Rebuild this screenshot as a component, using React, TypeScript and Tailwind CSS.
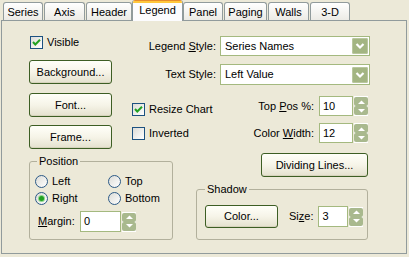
import type { ReactNode } from "react";

const tabs = [
  { label: "Series", w: "w-[40px]", ml: "ml-0" },
  { label: "Axis", w: "w-[41px]", ml: "ml-[1px]" },
  { label: "Header", w: "w-[46px]", ml: "ml-[1px]" },
  { label: "Legend", w: "w-[51px]", ml: "ml-0", active: true },
  { label: "Panel", w: "w-[40px]", ml: "ml-0" },
  { label: "Paging", w: "w-[43px]", ml: "ml-[1px]" },
  { label: "Walls", w: "w-[41px]", ml: "ml-[1px]" },
  { label: "3-D", w: "w-[40px]", ml: "ml-[1px]" },
];

function Tab({ label, w, ml, active }: { label: string; w: string; ml: string; active?: boolean }) {
  if (active) {
    return (
      <div
        className={`${w} ${ml} relative z-10 -mb-px flex h-[21px] flex-col overflow-hidden rounded-t-[3px] border-x border-[#919B9C] bg-[#FCFCFE]`}
      >
        <div className="h-px bg-[#E68B2C]" />
        <div className="h-[2px] bg-[#FFC73C]" />
        <div className="flex flex-1 items-start justify-center pt-px">{label}</div>
      </div>
    );
  }
  return (
    <div
      className={`${w} ${ml} flex h-[18px] items-center justify-center rounded-t-[3px] border-x border-t border-[#919B9C] bg-gradient-to-b from-white to-[#ECEBE5] pt-[2px]`}
    >
      {label}
    </div>
  );
}

function CheckBox({ checked, label }: { checked?: boolean; label: string }) {
  return (
    <div className="flex h-[13px] items-center">
      <div className="flex h-[13px] w-[13px] items-center justify-center border border-[#1C5180] bg-gradient-to-br from-[#DCDCD7] to-white">
        {checked && (
          <svg width="11" height="11" viewBox="0 0 11 11">
            <polyline points="2,5 4.3,7.5 9,2.8" fill="none" stroke="#21A121" strokeWidth="2" />
          </svg>
        )}
      </div>
      <span className="ml-[4px] leading-[13px]">{label}</span>
    </div>
  );
}

function Radio({ checked, label }: { checked?: boolean; label: string }) {
  return (
    <div className="flex h-[13px] items-center">
      <div className="flex h-[13px] w-[13px] items-center justify-center rounded-full border border-[#2C5A87] bg-gradient-to-br from-[#DCDCD7] to-white">
        {checked && <div className="h-[5px] w-[5px] rounded-full bg-[#21A121] shadow-[0_0_0_1px_#8FD68F]" />}
      </div>
      <span className="ml-[4px] leading-[13px]">{label}</span>
    </div>
  );
}

function Button({ children, className }: { children: ReactNode; className: string }) {
  return (
    <div
      className={`${className} flex items-center justify-center rounded-[3px] border border-[#3D5E24] bg-gradient-to-b from-[#FFFFF9] via-[#F6F4E8] to-[#E4E1CE] shadow-[inset_0_-1px_0_#D6D3BC]`}
    >
      {children}
    </div>
  );
}

function Edit({ value, className }: { value: string; className: string }) {
  return (
    <div className={`${className} flex items-center border border-[#A4B97F] bg-white pl-[3px]`}>{value}</div>
  );
}

function Spin() {
  return (
    <div className="ml-px flex h-[20px] w-[14px] flex-col justify-between bg-white py-px">
      {[0, 1].map((i) => (
        <div key={i} className="flex h-[9px] items-center justify-center rounded-[2px] bg-[#A9B98E]">
          <svg width="9" height="6" viewBox="0 0 9 6">
            <polygon points={i === 0 ? "1,5 4.5,1.5 8,5" : "1,1 4.5,4.5 8,1"} fill="white" />
          </svg>
        </div>
      ))}
    </div>
  );
}

function Combo({ value, className }: { value: string; className: string }) {
  return (
    <div className={`${className} flex items-center border border-[#A4B97F] bg-white p-px`}>
      <span className="flex-1 pl-[3px]">{value}</span>
      <div className="flex h-[16px] w-[16px] items-center justify-center rounded-[2px] bg-[#A3B582] shadow-[inset_0_0_0_1px_#B9C79E]">
        <svg width="10" height="8" viewBox="0 0 10 8">
          <polyline points="1.5,2 5,5.5 8.5,2" fill="none" stroke="white" strokeWidth="2.2" />
        </svg>
      </div>
    </div>
  );
}

function SpinRow({ label, value, className }: { label: ReactNode; value: string; className?: string }) {
  return (
    <div className={`${className ?? ""} flex h-[20px] items-center justify-end`}>
      <span className="mr-[5px]">{label}</span>
      <Edit value={value} className="h-[20px] w-[34px]" />
      <Spin />
    </div>
  );
}

export default function App() {
  return (
    <div className="h-[257px] w-[409px] overflow-hidden bg-[#ECE9D8] font-['Liberation_Sans',Arial,sans-serif] text-[11px] leading-[13px] text-black">
      <div className="flex h-[20px] items-end pl-[3px]">
        {tabs.map((t) => (
          <Tab key={t.label} {...t} />
        ))}
      </div>

      <div className="ml-px h-[234px] w-[406px] border border-[#919B9C] bg-[#ECE9D8] pl-[27px] pt-[15px]">
        {/* top part */}
        <div className="flex items-start">
          <div className="flex w-[83px] flex-col">
            <div className="ml-px">
              <CheckBox checked label="Visible" />
            </div>
            <Button className="mt-[11px] h-[24px] w-[83px]">Background...</Button>
            <Button className="mt-[9px] h-[24px] w-[83px]">Font...</Button>
            <Button className="mt-[8px] h-[24px] w-[83px]">Frame...</Button>
          </div>

          <div className="ml-[20px] flex w-[238px] flex-col">
            <div className="flex h-[20px] items-center">
              <span className="flex-1 pr-[4px] text-right">
                Legend <u>S</u>tyle:
              </span>
              <Combo value="Series Names" className="h-[20px] w-[150px]" />
            </div>
            <div className="mt-[8px] flex h-[21px] items-center">
              <span className="flex-1 pr-[4px] text-right">Text Style:</span>
              <Combo value="Left Value" className="h-[21px] w-[150px]" />
            </div>
            <div className="mt-[11px] flex justify-between pr-[2px]">
              <div className="flex flex-col pt-[7px]">
                <CheckBox checked label="Resize Chart" />
                <div className="mt-[11px]">
                  <CheckBox label="Inverted" />
                </div>
              </div>
              <div className="flex flex-col">
                <SpinRow
                  label={
                    <>
                      Top <u>P</u>os %:
                    </>
                  }
                  value="10"
                />
                <SpinRow
                  className="mt-[7px]"
                  label={
                    <>
                      Color <u>W</u>idth:
                    </>
                  }
                  value="12"
                />
              </div>
            </div>
          </div>
        </div>

        {/* bottom part */}
        <div className="mt-[4px] flex items-start">
          <fieldset className="mt-[2px] h-[85px] w-[144px] rounded-[3px] border border-[#B2B09C]">
            <legend className="ml-[7px] px-[2px] leading-[13px]">Position</legend>
            <div className="pl-[5px] pt-[7px]">
              <div className="grid grid-cols-[73px_auto] gap-y-[4px]">
                <Radio label="Left" />
                <Radio label="Top" />
                <Radio checked label="Right" />
                <Radio label="Bottom" />
              </div>
              <div className="mt-[6px] flex items-center">
                <span className="ml-[3px] w-[42px]">
                  <u>M</u>argin:
                </span>
                <Edit value="0" className="h-[21px] w-[41px]" />
                <Spin />
              </div>
            </div>
          </fieldset>

          <div className="ml-[23px] flex w-[172px] flex-col">
            <Button className="h-[24px] w-[107px] self-end">Dividing Lines...</Button>
            <fieldset className="mt-[6px] h-[57px] rounded-[3px] border border-[#B2B09C]">
              <legend className="ml-[8px] px-[2px] leading-[13px]">Shadow</legend>
              <div className="flex h-[23px] items-center pl-[8px] mt-[9px]">
                <Button className="h-[23px] w-[73px]">Color...</Button>
                <span className="ml-[11px] mr-[5px]">
                  Si<u>z</u>e:
                </span>
                <Edit value="3" className="h-[21px] w-[30px]" />
                <Spin />
              </div>
            </fieldset>
          </div>
        </div>
      </div>
    </div>
  );
}
